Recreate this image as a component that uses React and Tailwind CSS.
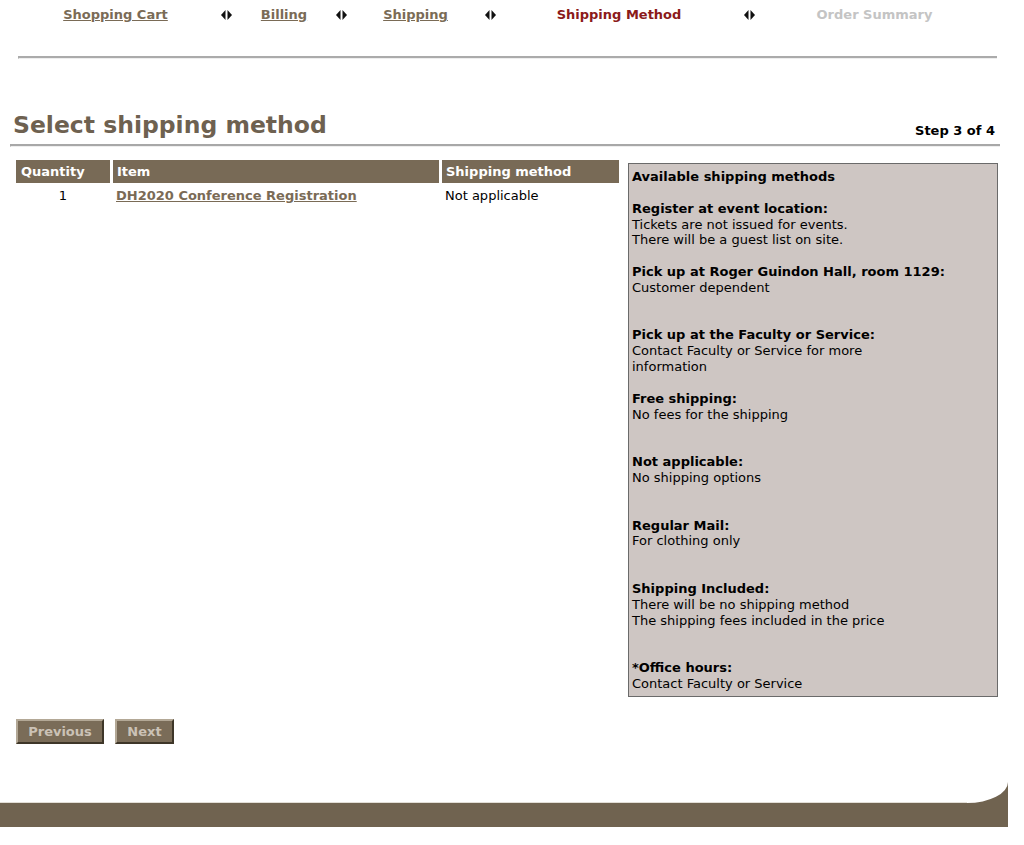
import React from "react";

const font = { fontFamily: '"DejaVu Sans", Verdana, sans-serif' };

function StepArrow() {
  return (
    <svg width="11" height="10" viewBox="0 0 11 10" className="block">
      <polygon points="0,5 4.5,0 4.5,10" fill="#111" />
      <polygon points="6.5,0 11,5 6.5,10" fill="#111" />
    </svg>
  );
}

const steps = [
  { label: "Shopping Cart", w: "w-[171px]", kind: "link" },
  { arrow: true, w: "w-[50px]" },
  { label: "Billing", w: "w-[66px]", kind: "link" },
  { arrow: true, w: "w-[48px]" },
  { label: "Shipping", w: "w-[101px]", kind: "link" },
  { arrow: true, w: "w-[48px]" },
  { label: "Shipping Method", w: "w-[210px]", kind: "current" },
  { arrow: true, w: "w-[50px]" },
  { label: "Order Summary", w: "w-[201px]", kind: "future" },
];

const methods = [
  { title: "Register at event location:", lines: ["Tickets are not issued for events.", "There will be a guest list on site."], after: 1 },
  { title: "Pick up at Roger Guindon Hall, room 1129:", lines: ["Customer dependent"], after: 2 },
  { title: "Pick up at the Faculty or Service:", lines: ["Contact Faculty or Service for more", "information"], after: 1 },
  { title: "Free shipping:", lines: ["No fees for the shipping"], after: 2 },
  { title: "Not applicable:", lines: ["No shipping options"], after: 2 },
  { title: "Regular Mail:", lines: ["For clothing only"], after: 2 },
  { title: "Shipping Included:", lines: ["There will be no shipping method", "The shipping fees included in the price"], after: 2 },
  { title: "*Office hours:", lines: ["Contact Faculty or Service"], after: 0 },
];

export default function App() {
  return (
    <div className="bg-white w-[1024px] h-[845px] text-[13px] text-black" style={font}>
      {/* Step navigation */}
      <div className="flex items-center pl-[30px] pt-[7px] leading-[16px] font-bold">
        {steps.map((s, i) =>
          s.arrow ? (
            <div key={i} className={`${s.w} flex justify-center`}>
              <StepArrow />
            </div>
          ) : (
            <div key={i} className={`${s.w} text-center`}>
              {s.kind === "link" && <span className="text-[#7a6b56] underline">{s.label}</span>}
              {s.kind === "current" && <span className="text-[#8b1a1a]">{s.label}</span>}
              {s.kind === "future" && <span className="text-[#c4c4c4]">{s.label}</span>}
            </div>
          )
        )}
      </div>
      <div className="ml-[18px] w-[979px] mt-[33px] border-t-2 border-l border-[#ababab] border-b border-b-[#eeeeee] h-[3px]" />

      {/* Title */}
      <div className="flex items-end justify-between ml-[13px] w-[982px] mt-[52px]">
        <h1 className="text-[23.5px] leading-[29px] font-bold text-[#6e6150]">Select shipping method</h1>
        <div className="font-bold leading-[16px] mb-[1px]">Step 3 of 4</div>
      </div>
      <div className="ml-[10px] w-[990px] mt-[4px] border-t-2 border-l border-[#a8a8a8] border-b border-b-[#eeeeee] h-[3px]" />

      {/* Content */}
      <div className="flex items-start ml-[16px] mt-[13px]">
        <div className="grid grid-cols-[94px_326px_177px] gap-x-[3px] w-[603px] leading-[16px]">
          <div className="bg-[#786a56] text-white font-bold h-[23px] flex items-center pl-[5px]">Quantity</div>
          <div className="bg-[#786a56] text-white font-bold h-[23px] flex items-center pl-[4px]">Item</div>
          <div className="bg-[#786a56] text-white font-bold h-[23px] flex items-center pl-[4px]">Shipping method</div>
          <div className="text-center pt-[5px]">1</div>
          <div className="pt-[5px] pl-[3px]">
            <span className="text-[#7a6b56] font-bold underline">DH2020 Conference Registration</span>
          </div>
          <div className="pt-[5px] pl-[3px]">Not applicable</div>
        </div>

        <div className="ml-[9px] mt-[3px] w-[370px] bg-[#cec6c3] border border-[#6a6a6a] pl-[3px] pt-[5px] pb-[4px] leading-[15.85px]">
          <div className="font-bold">Available shipping methods</div>
          <div>&nbsp;</div>
          {methods.map((m, i) => (
            <div key={i}>
              <div className="font-bold">{m.title}</div>
              {m.lines.map((l, j) => (
                <div key={j}>{l}</div>
              ))}
              {Array.from({ length: m.after }).map((_, k) => (
                <div key={k}>&nbsp;</div>
              ))}
            </div>
          ))}
        </div>
      </div>

      {/* Buttons */}
      <div className="flex gap-[11px] ml-[16px] mt-[22px]">
        <button className="h-[25px] w-[88px] bg-[#7a6c58] text-[#cbc2b6] font-bold border-2 border-t-[#b3a896] border-l-[#b3a896] border-r-[#3e3628] border-b-[#3e3628]">
          Previous
        </button>
        <button className="h-[25px] w-[59px] bg-[#7a6c58] text-[#cbc2b6] font-bold border-2 border-t-[#b3a896] border-l-[#b3a896] border-r-[#3e3628] border-b-[#3e3628]">
          Next
        </button>
      </div>

      {/* Footer band */}
      <svg width="1008" height="46" viewBox="0 0 1008 46" className="block mt-[38px]">
        <path d="M0 21 H967 A41 21 0 0 0 1008 0 V45 H0 Z" fill="#706350" />
        <path d="M0 20.5 H967" stroke="#e2ded6" strokeWidth="1" />
      </svg>
    </div>
  );
}
